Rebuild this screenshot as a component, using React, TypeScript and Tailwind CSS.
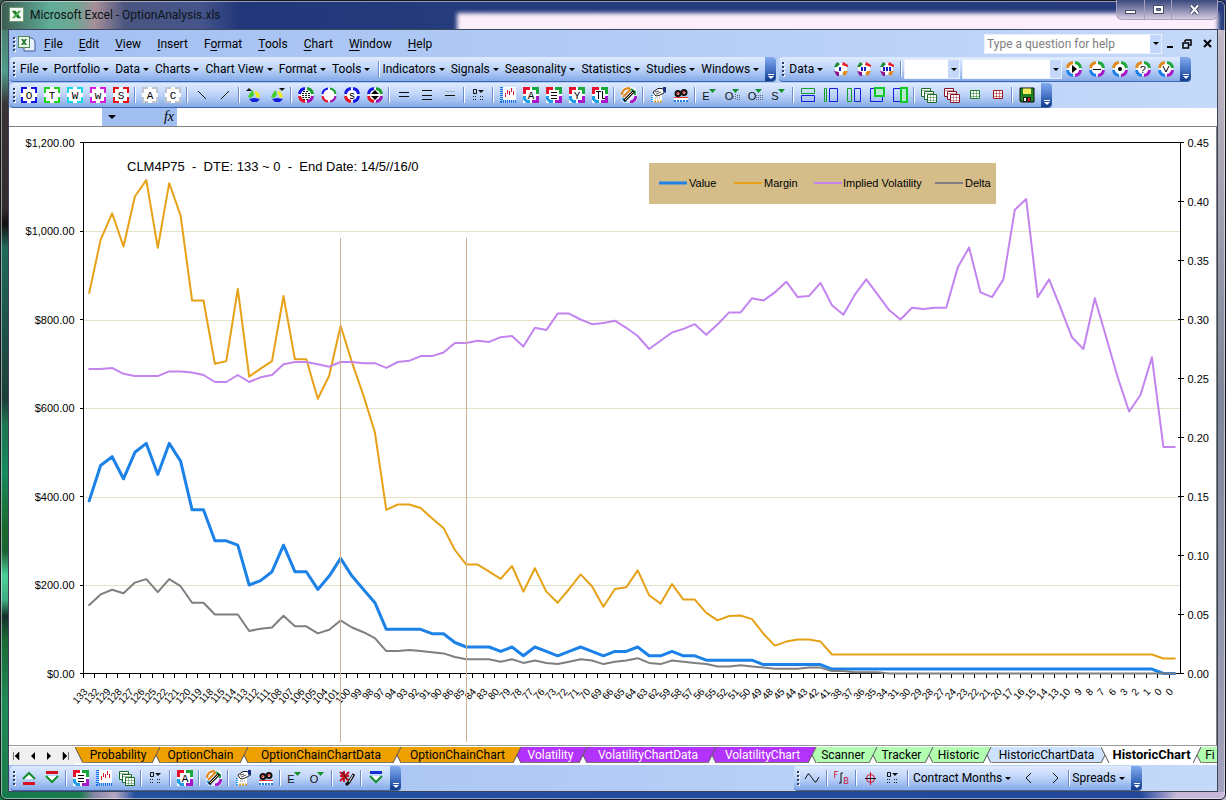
import React, { useState } from 'react';

const labels = [
  133, 132, 129, 128, 127, 126, 125, 122, 121, 120, 119, 118, 115, 114, 113, 112, 111, 108, 107, 106, 105, 104, 101, 100,
  99, 98, 97, 94, 93, 92, 91, 90, 86, 85, 84, 83, 80, 79, 78, 77, 76, 73, 72, 71, 70, 69, 66, 65, 64, 63, 62, 59, 58, 57,
  56, 55, 52, 51, 50, 49, 48, 45, 44, 43, 42, 41, 38, 37, 36, 35, 34, 31, 30, 29, 28, 27, 24, 23, 22, 21, 20, 17, 16, 15,
  14, 13, 10, 9, 8, 7, 6, 3, 2, 1, 0, 0,
];

const valueData = [
  390, 470, 490, 440, 500, 520, 450, 520, 480, 370, 370, 300, 300, 290, 200, 210, 230, 290, 230, 230, 190, 220, 260, 220,
  190, 160, 100, 100, 100, 100, 90, 90, 70, 60, 60, 60, 50, 60, 40, 60, 50, 40, 50, 60, 50, 40, 50, 50, 60, 40, 40, 50,
  40, 40, 30, 30, 30, 30, 30, 20, 20, 20, 20, 20, 20, ...Array(29).fill(10), 0, 0,
];

const marginData = [
  860, 980, 1040, 965, 1078, 1115, 962, 1108, 1035, 843, 843, 700, 706, 869, 671, 689, 706, 853, 710, 710, 621, 673, 786,
  703, 628, 545, 370, 382, 382, 374, 351, 329, 279, 246, 246, 230, 214, 243, 185, 238, 185, 160, 191, 224, 197, 151, 191,
  195, 233, 177, 158, 202, 167, 167, 137, 120, 130, 131, 123, 90, 63, 72, 77, 77, 72, ...Array(29).fill(43), 34, 34,
];

const volatilityData = [
  0.258, 0.258, 0.259, 0.254, 0.252, 0.252, 0.252, 0.256, 0.256, 0.255, 0.253, 0.247, 0.247, 0.253, 0.247, 0.251, 0.253,
  0.262, 0.264, 0.264, 0.262, 0.26, 0.264, 0.264, 0.263, 0.263, 0.259, 0.264, 0.265, 0.269, 0.269, 0.272, 0.28, 0.28,
  0.282, 0.281, 0.285, 0.286, 0.277, 0.293, 0.291, 0.305, 0.305, 0.3, 0.296, 0.297, 0.299, 0.293, 0.286, 0.275, 0.282,
  0.289, 0.292, 0.296, 0.287, 0.296, 0.306, 0.306, 0.318, 0.316, 0.323, 0.332, 0.319, 0.32, 0.331, 0.312, 0.304, 0.321,
  0.334, 0.321, 0.308, 0.3, 0.31, 0.309, 0.31, 0.31, 0.344, 0.361, 0.323, 0.319, 0.334, 0.393, 0.402, 0.319, 0.334,
  0.31, 0.285, 0.275, 0.318, 0.285, 0.251, 0.222, 0.236, 0.268, 0.192, 0.192,
];

const deltaData = [
  0.058, 0.067, 0.071, 0.068, 0.077, 0.08, 0.069, 0.08, 0.074, 0.06, 0.06, 0.05, 0.05, 0.05, 0.036, 0.038, 0.039, 0.049,
  0.04, 0.04, 0.034, 0.037, 0.045, 0.039, 0.035, 0.03, 0.019, 0.019, 0.02, 0.019, 0.018, 0.017, 0.014, 0.012, 0.012,
  0.012, 0.01, 0.012, 0.009, 0.011, 0.009, 0.008, 0.01, 0.012, 0.011, 0.008, 0.01, 0.011, 0.013, 0.009, 0.008, 0.011,
  0.01, 0.009, 0.008, 0.006, 0.006, 0.007, 0.006, 0.005, 0.004, 0.004, 0.004, 0.005, 0.005, 0.002, 0.002, 0.001, 0.001,
  0.001, ...Array(26).fill(0),
];

// Plot area inside the chart svg
const LEFT = 73.5;
const RIGHT = 1170.5;
const TOP = 15.5;
const BOTTOM = 546.5;
const STEP = (RIGHT - LEFT) / labels.length;

const pointX = (i: number) => LEFT + STEP * (i + 0.5);

const toPoints = (data: number[], max: number) =>
  data.map((v, i) => `${pointX(i).toFixed(1)},${(BOTTOM - (v / max) * (BOTTOM - TOP)).toFixed(1)}`).join(' ');

const series = [
  { name: 'Margin', color: '#e6a117', width: 2, data: marginData, max: 1200 },
  { name: 'Value', color: '#1c82e8', width: 3, data: valueData, max: 1200 },
  { name: 'Implied Volatility', color: '#c384f0', width: 2, data: volatilityData, max: 0.45 },
  { name: 'Delta', color: '#7f7f7f', width: 2, data: deltaData, max: 0.45 },
];

const legend = [
  { name: 'Value', color: '#1c82e8', width: 3, x: 649, textX: 679 },
  { name: 'Margin', color: '#e6a117', width: 2, x: 724, textX: 754 },
  { name: 'Implied Volatility', color: '#c384f0', width: 2, x: 804, textX: 833 },
  { name: 'Delta', color: '#7f7f7f', width: 2, x: 925, textX: 955 },
];

const HistoricChart = () => (
  <svg viewBox="0 0 1206 618" className="block w-full font-['Liberation_Sans',Arial,sans-serif]" role="img" aria-label="HistoricChart">
    {[200, 400, 600, 800, 1000].map((v) => {
      const y = Math.round(BOTTOM - (v / 1200) * (BOTTOM - TOP)) + 0.5;
      return <line key={v} x1={LEFT} x2={RIGHT} y1={y} y2={y} stroke="#e4e2c8" />;
    })}

    {/* Axes */}
    <path d={`M${LEFT} ${TOP}H${RIGHT}V${BOTTOM}H${LEFT}Z`} fill="none" stroke="#000" shapeRendering="crispEdges" />
    {[0, 200, 400, 600, 800, 1000, 1200].map((v) => {
      const y = BOTTOM - (v / 1200) * (BOTTOM - TOP);
      return (
        <g key={v}>
          <line x1={LEFT - 4} x2={LEFT} y1={y} y2={y} stroke="#000" shapeRendering="crispEdges" />
          <text x={LEFT - 9} y={y + 4} textAnchor="end" fontSize="11">
            ${v.toLocaleString('en-US')}.00
          </text>
        </g>
      );
    })}
    {[0, 1, 2, 3, 4, 5, 6, 7, 8, 9].map((n) => {
      const y = BOTTOM - (n / 9) * (BOTTOM - TOP);
      return (
        <g key={n}>
          <line x1={RIGHT - 3} x2={RIGHT + 3} y1={y} y2={y} stroke="#000" shapeRendering="crispEdges" />
          <text x={RIGHT + 7} y={y + 4} fontSize="11">
            {(n * 0.05).toFixed(2)}
          </text>
        </g>
      );
    })}
    {labels.map((label, i) => (
      <g key={i}>
        <line x1={LEFT + STEP * i} x2={LEFT + STEP * i} y1={BOTTOM} y2={BOTTOM + 4} stroke="#000" shapeRendering="crispEdges" />
        <text transform={`translate(${(pointX(i) - 1).toFixed(1)} 565) rotate(-48)`} textAnchor="end" fontSize="10">
          {label}
        </text>
      </g>
    ))}

    {series.map((s) => (
      <polyline
        key={s.name}
        points={toPoints(s.data, s.max)}
        fill="none"
        stroke={s.color}
        strokeWidth={s.width}
        strokeLinejoin="round"
        strokeLinecap="round"
      />
    ))}

    {/* Expiry markers */}
    <path d="M330.5 111V615M456.5 111V615" stroke="#cdb08f" shapeRendering="crispEdges" />

    <text x="117" y="44" fontSize="13" className="whitespace-pre">
      {'CLM4P75  -  DTE: 133 ~ 0  -  End Date: 14/5//16/0'}
    </text>

    <rect x="639" y="36" width="347" height="41" fill="#d5bd8a" />
    {legend.map((l) => (
      <g key={l.name}>
        <line x1={l.x} x2={l.x + 28} y1="56" y2="56" stroke={l.color} strokeWidth={l.width} />
        <text x={l.textX} y="60" fontSize="11">
          {l.name}
        </text>
      </g>
    ))}
  </svg>
);

/* ---------- icons ---------- */

const Icon = ({ children }: { children: React.ReactNode }) => (
  <svg width="16" height="16" viewBox="0 0 16 16" fill="none" aria-hidden="true">
    {children}
  </svg>
);

const Glyph = ({ children, fill = '#000' }: { children: string; fill?: string }) => (
  <text x="8" y="12" textAnchor="middle" fontSize="11" fill={fill} className="font-['Liberation_Mono',monospace]">
    {children}
  </text>
);

const Bracket = ({ color, letter }: { color: string; letter: string }) => (
  <Icon>
    <path d="M0 0H16V16H0Z" fill="#fff" />
    <path d="M6 1H1V6M10 1H15V6M15 10V15H10M6 15H1V10" stroke={color} strokeWidth="2" />
    <Glyph>{letter}</Glyph>
  </Icon>
);

const ColorBracket = ({ children }: { children: React.ReactNode }) => (
  <Icon>
    <path d="M0 0H16V16H0Z" fill="#fff" />
    <path d="M7 1.5H1.5V7" stroke="#e8112d" strokeWidth="3" />
    <path d="M9 1.5H14.5V7" stroke="#19a83c" strokeWidth="3" />
    <path d="M14.5 9V14.5H9" stroke="#a818c8" strokeWidth="3" />
    <path d="M7 14.5H4L1.5 12V9" stroke="#1f9fe8" strokeWidth="3" />
    {children}
  </Icon>
);

const Ring = ({ colors, width = 3, children }: { colors: string[]; width?: number; children?: React.ReactNode }) => (
  <Icon>
    <circle cx="8" cy="8" r="7" fill="#fff" />
    <path d="M1.5 7A6.5 6.5 0 0 1 7 1.5" stroke={colors[0]} strokeWidth={width} />
    <path d="M9 1.5A6.5 6.5 0 0 1 14.5 7" stroke={colors[1]} strokeWidth={width} />
    <path d="M14.5 9A6.5 6.5 0 0 1 9 14.5" stroke={colors[2]} strokeWidth={width} />
    <path d="M7 14.5A6.5 6.5 0 0 1 1.5 9" stroke={colors[3]} strokeWidth={width} />
    {children}
  </Icon>
);

const rainbow = ['#e08a1e', '#1ea83c', '#a818c8', '#1f7fe8'];
const primary = ['#1414e6', '#18a028', '#a010b0', '#e81020'];

const StackIcon = ({ color }: { color: string }) => (
  <Icon>
    <path d="M.5 1.5H9.5V9.5H.5Z" fill="#fff" stroke={color} />
    <path d="M3.5 4.5H12.5V12.5H3.5Z" fill="#fff" stroke={color} />
    <path d="M6.5 7.5H15.5V15.5H6.5Z" fill="#fff" stroke={color} />
    <path d="M7 10.5H15M7 13.5H15M9.5 8V15M12.5 8V15M1 3.5H9M4 6.5H12" stroke={color} strokeOpacity="0.4" />
  </Icon>
);

const SheetIcon = ({ color }: { color: string }) => (
  <Icon>
    <path d="M3.5 3.5H12.5V11.5H3.5Z" fill="#fff" stroke={color} />
    <path d="M3.5 6.5H12.5M3.5 9.5H12.5M6.5 3.5V11.5M9.5 3.5V11.5" stroke={color} strokeOpacity="0.5" />
  </Icon>
);

const LinesIcon = ({ rows, pale }: { rows: number[]; pale?: number[] }) => (
  <Icon>
    {rows.map((y) => (
      <path key={y} d={`M3 ${y}.5H13`} stroke="#111" />
    ))}
    {(pale || []).map((y) => (
      <path key={y} d={`M3 ${y}.5H13`} stroke="#a8b4c8" />
    ))}
  </Icon>
);

const ChartIcon = () => (
  <Icon>
    <path d="M3 0H16V13H3Z" fill="#fff" />
    <path d="M1.5 0V14.5H16" stroke="#a8d0f8" strokeWidth="3" />
    <path d="M1.5 0V14.5H16" stroke="#1f6fe8" strokeWidth="3" strokeDasharray="1 1" />
    <path d="M5.5 10V6M7.5 7V3M9.5 8V4M11.5 5V1M13.5 8V4" stroke="#d81830" />
  </Icon>
);

const DotsIcon = () => (
  <Icon>
    <path d="M2.5 2.5H5.5V6.5H2.5Z" stroke="#111" />
    <path d="M7 3H13L10 6Z" fill="#111" />
    <path d="M2 9.5H6M9 9.5H13M2 12.5H6M9 12.5H13" stroke="#222" strokeDasharray="1 1" />
  </Icon>
);

const BrushIcon = () => (
  <Icon>
    <path d="M3 0H13L16 3V13L13 16H3L0 13V3Z" fill="#fff" fillOpacity="0.7" />
    <path d="M1 8Q1 1 9 1M2 10L10 2" stroke="#e6861a" strokeWidth="2" />
    <path d="M10 2L14 5V8" stroke="#1ea83c" strokeWidth="2" />
    <path d="M9 15Q14 15 15 9" stroke="#a818c8" strokeWidth="3" />
    <path d="M1 11L5 15" stroke="#1f9fe8" strokeWidth="2" />
    <path d="M3 14L13 4" stroke="#111" strokeWidth="3" />
    <path d="M4 13L12 5" stroke="#f0e4a0" />
  </Icon>
);

const HandIcon = () => (
  <Icon>
    <path d="M2 7H12V15H2Z" fill="#fff" />
    <path d="M3 5L8 1.5H12L14 3V6L10 8L6 9L4 7Z" fill="#fff" stroke="#222" />
    <path d="M5 5L9 4M6 7L11 5" stroke="#555" />
    <path d="M13 0H16V6L13 4Z" fill="#1a2f80" />
    <path d="M2 8V15" stroke="#1f9fe8" strokeWidth="2" strokeDasharray="1 1" />
    <path d="M4 14.5H13" stroke="#e0a020" strokeWidth="2" strokeDasharray="2 1" />
    <path d="M5 11H11" stroke="#888" strokeDasharray="1 1" />
  </Icon>
);

const GlassesIcon = () => (
  <Icon>
    <path d="M1 10H15V15H1Z" fill="#fff" />
    <circle cx="5" cy="6.5" r="2.5" fill="#f8a090" stroke="#111" strokeWidth="2" />
    <circle cx="11" cy="5.5" r="2.5" fill="#f8a090" stroke="#111" strokeWidth="2" />
    <path d="M4 7L6 5M10 6L12 4" stroke="#e81828" />
    <path d="M1 10.5H15" stroke="#e83030" />
    <path d="M1 14H15" stroke="#1f7fe8" strokeWidth="2" strokeDasharray="2 1" />
  </Icon>
);

const LetterDrop = ({ letter, tail }: { letter: string; tail?: string }) => (
  <Icon>
    <text x="4" y="13" textAnchor="middle" fontSize="11" fill="#111" className="font-['Liberation_Sans',Arial,sans-serif]">
      {letter}
    </text>
    <path d="M7 2H14L10.5 6Z" fill="#12902c" />
    {tail && <path d={tail} stroke="#667" strokeDasharray="1 1" />}
  </Icon>
);

const WedgeIcon = ({ flip }: { flip?: boolean }) => (
  <Icon>
    <path d={flip ? 'M10 1H16L13 4Z' : 'M0 4H6L3 1Z'} fill="#111" />
    <path d="M2 10Q3 6 7 3L8 8L5 11Z" fill="#42d030" />
    <path d="M8 4Q13 4 14 10L11 11Z" fill="#f0e818" />
    <path d="M3 12L8 11L14 12L11 15H6Z" fill="#1420d8" />
  </Icon>
);

const BarsRing = ({ bars }: { bars: number[] }) => (
  <Icon>
    <circle cx="8" cy="8" r="6" fill="#fff" />
    <path d="M1 6L4 1L7 3L4 6Z" fill="#158a30" />
    <path d="M10 1L15 4V6L9 4Z" fill="#e81828" />
    <path d="M11 10H15L12 15L9 13Z" fill="#e08a1e" />
    <path d="M1 10L6 11V15H4Z" fill="#901090" />
    {bars.map((x) => (
      <path key={x} d={`M${x} 6V10`} stroke="#1420c8" strokeWidth="2" />
    ))}
  </Icon>
);

const SplitIcon = ({ green, blue, fill }: { green: string; blue: string; fill?: string }) => (
  <Icon>
    <path d={blue} stroke="#1420d8" />
    <path d={green} stroke={fill ? '#10c828' : '#12a028'} strokeWidth={fill ? 2 : 1} fill={fill || 'none'} />
  </Icon>
);

const ArrowBars = ({ down, top, bottom }: { down?: boolean; top: string; bottom: string }) => (
  <Icon>
    <path d={down ? 'M2 2.5H14' : 'M2 13.5H14'} stroke={top} strokeWidth="3" />
    <path d={down ? 'M2 6L8 12L14 6' : 'M2 9L8 3L14 9'} stroke={bottom} strokeWidth="2" fill="#fff" />
  </Icon>
);

const ClearIcon = () => (
  <Icon>
    <path d="M1 2L10 11M10 2L1 11M5 1V12M1 6H10" stroke="#c81020" strokeWidth="2" />
    <path d="M3 2L8 9" stroke="#222" />
    <path d="M15 4L10 12L7 15" stroke="#111" strokeWidth="3" />
    <path d="M14 5L10 12" stroke="#fff" />
  </Icon>
);

const SaveIcon = () => (
  <Icon>
    <path d="M1 1H15V15H2L1 14Z" fill="#20861f" stroke="#111" />
    <path d="M4 1.5H12V7H4Z" fill="#f4ec60" />
    <path d="M4 10H12V15H4Z" fill="#222" />
    <path d="M9 11H11V14H9Z" fill="#e81828" />
    <path d="M5 11H7V14H5Z" fill="#fff" />
  </Icon>
);

/* ---------- toolbar pieces ---------- */

const Caret = () => <span className="inline-block border-x-3 border-t-3 border-x-transparent border-t-black" />;

const Grip = () => (
  <svg width="4" height="16" viewBox="0 0 4 16" className="ml-[3px] shrink-0" aria-hidden="true">
    {[1, 5, 9, 13].map((y) => (
      <g key={y}>
        <rect x="1" y={y + 1} width="2" height="2" fill="#fff" />
        <rect x="0" y={y} width="2" height="2" fill="#2b3f66" />
      </g>
    ))}
  </svg>
);

const Sep = () => (
  <span className="flex w-[6px] shrink-0 justify-center">
    <span className="h-4 w-px bg-[#6a8ccb]" />
    <span className="h-4 w-px bg-white" />
  </span>
);

const ToolbarEnd = () => (
  <button
    aria-label="Toolbar options"
    className="ml-auto flex h-full w-[11px] shrink-0 flex-col items-center justify-end rounded-r-sm bg-linear-to-b from-[#82aaf0] via-[#4a78c8] to-[#103a8c] pb-[2px]"
  >
    <span className="h-px w-[6px] bg-white" />
    <span className="mt-px border-x-3 border-t-3 border-x-transparent border-t-white" />
  </button>
);

const Toolbar = ({ children, className }: { children: React.ReactNode; className?: string }) => (
  <div
    role="toolbar"
    className={`flex h-[25px] items-center rounded-sm border-b border-[#3c66ae] bg-linear-to-b from-[#dfebfe] via-[#bcd3f8] to-[#85aae8] ${className || ''}`}
  >
    <Grip />
    {children}
    <ToolbarEnd />
  </div>
);

const Tool = ({ label, children }: { label: string; children: React.ReactNode }) => (
  <button aria-label={label} className="flex h-[22px] w-[23px] shrink-0 items-center justify-center hover:bg-white/50">
    {children}
  </button>
);

const Drop = ({ label }: { label: string }) => (
  <button className="flex shrink-0 items-center gap-[3px] whitespace-nowrap pr-[6px] hover:bg-white/50">
    {label}
    <Caret />
  </button>
);

const Combo = ({ label, className }: { label: string; className: string }) => (
  <span className={`relative h-[20px] shrink-0 border border-[#e8f0ff] bg-white ${className}`}>
    <select aria-label={label} className="h-full w-full appearance-none bg-transparent">
      <option value=""></option>
    </select>
    <span className="pointer-events-none absolute inset-y-0 right-0 flex w-[11px] items-center justify-center bg-[#c3d8fa]">
      <Caret />
    </span>
  </span>
);

const menus = [
  ['', 'F', 'ile'],
  ['', 'E', 'dit'],
  ['', 'V', 'iew'],
  ['', 'I', 'nsert'],
  ['F', 'o', 'rmat'],
  ['', 'T', 'ools'],
  ['', 'C', 'hart'],
  ['', 'W', 'indow'],
  ['', 'H', 'elp'],
];

const ORANGE = '#eda000';
const PURPLE = '#b433fc';
const GREEN = '#b2ffb2';
const BLUE = '#cce2ff';

const tabs = [
  { name: 'Probability', color: ORANGE, width: 'w-[68px]' },
  { name: 'OptionChain', color: ORANGE, width: 'w-[79px]' },
  { name: 'OptionChainChartData', color: ORANGE, width: 'w-[144px]' },
  { name: 'OptionChainChart', color: ORANGE, width: 'w-[111px]' },
  { name: 'Volatility', color: PURPLE, width: 'w-[57px]' },
  { name: 'VolatilityChartData', color: PURPLE, width: 'w-[120px]' },
  { name: 'VolatilityChart', color: PURPLE, width: 'w-[91px]' },
  { name: 'Scanner', color: GREEN, width: 'w-[52px]' },
  { name: 'Tracker', color: GREEN, width: 'w-[47px]' },
  { name: 'Historic', color: GREEN, width: 'w-[49px]' },
  { name: 'HistoricChartData', color: BLUE, width: 'w-[109px]' },
  { name: 'HistoricChart', color: '#ffffff', width: 'w-[83px]' },
  { name: 'Fi', color: GREEN, width: 'w-[16px]' },
];

// Slanted edge between two neighbouring sheet tabs
const TabEdge = ({ left, right, front }: { left?: string; right: string; front: boolean }) => (
  <svg width="9" height="16" viewBox="0 0 9 16" className="shrink-0" aria-hidden="true">
    {front ? (
      <>
        <path d="M0 0H9V16H0Z" fill={left ? '#fff' : '#f0f0f0'} />
        {left && <path d="M0 0L4 8L0 16Z" fill={left} />}
        <path d="M0 0H9V16H8Z" fill={right} />
        <path d={left ? 'M0 0L8 16M4 8L0 16' : 'M0 0L8 16'} stroke="#555" fill="none" />
      </>
    ) : (
      <>
        <path d="M0 0H9V16H0Z" fill="#fff" />
        <path d="M0 0H8L0 16Z" fill={left} />
        <path d="M8 0H9V16H8L4 8Z" fill={right} />
        <path d="M8 0L0 16M4 8L8 16" stroke="#555" fill="none" />
      </>
    )}
  </svg>
);

const App: React.FC = () => {
  const [activeTab, setActiveTab] = useState('HistoricChart');
  const [question, setQuestion] = useState('');

  return (
    <div className="relative min-h-screen overflow-hidden bg-[linear-gradient(180deg,#4a6a5c_0%,#4f9c8a_9%,#3a3335_13%,#332c2e_26%,#14100f_28%,#1f6a5c_31%,#1c3f38_50%,#1b7550_53%,#178a60_59%,#1a6a2c_66%,#1b6434_69%,#4ad09a_72%,#3fae80_75%,#12302a_77%,#1a6a34_80%,#1f8a58_88%,#1b7a4c_100%)] font-[Roboto,sans-serif] text-[12px] leading-4 text-black">
      {/* Glass frame tint */}
      <div className="absolute inset-y-0 right-0 w-2 bg-linear-to-b from-[#c9bccb] via-[#7e8799] to-[#a4a2bd]" />
      <div className="absolute inset-x-0 bottom-0 h-2 bg-[linear-gradient(90deg,#137a4e_0,#1c7a50_80px,#8a86a8_95px,#b8a8c4_115px,#2450a0_135px,#22479b_93%,#c8b8d8_96%)]" />
      <div className="absolute inset-x-0 top-0 h-[30px] bg-[linear-gradient(90deg,#3d5a50_0,#5fae98_50px,#6fa593_75px,#a68f98_95px,#4a5580_125px,#45548a_200px,#22377a_240px,#243b7c_450px,#283c7c_100%)]" />
      <div className="absolute top-[13px] right-2 left-[457px] h-[20px] bg-[#fceefb] blur-[2px]" />
      <div className="absolute inset-0 rounded-md border border-[#14181c] shadow-[inset_0_0_0_1px_#ffffff80]" />

      <div className="relative flex min-h-screen flex-col pr-2 pb-2 pl-2">
        {/* Title bar */}
        <header className="flex h-[29px] items-center">
          <svg width="15" height="15" viewBox="0 0 16 16" className="ml-[1px]" aria-hidden="true">
            <rect x="0.5" y="0.5" width="15" height="15" rx="1" fill="#f4faf2" stroke="#6a9a6a" />
            <path d="M3 4H7L13 12H9Z" fill="#1e7a2c" />
            <path d="M10 4H13L6 12H3Z" fill="#4aa84c" />
          </svg>
          <h1 className="ml-[6px] text-[#0c1418]">Microsoft Excel - OptionAnalysis.xls</h1>
          <div className="ml-auto flex h-[20px] self-start overflow-hidden rounded-b-md border border-t-0 border-[#a8a0bc] bg-linear-to-b from-[#3a487c] to-[#d8cbe0]">
            <button aria-label="Minimize" className="flex w-[28px] items-center justify-center border-r border-[#a8a0bc]">
              <svg width="13" height="13" viewBox="0 0 13 13" aria-hidden="true">
                <rect x="1.5" y="7.5" width="10" height="3" fill="#fff" stroke="#444b66" />
              </svg>
            </button>
            <button aria-label="Restore" className="flex w-[27px] items-center justify-center border-r border-[#a8a0bc]">
              <svg width="13" height="13" viewBox="0 0 13 13" aria-hidden="true">
                <path d="M1.5 2.5H11.5V10.5H1.5ZM4.5 5.5V7.5H8.5V5.5Z" fill="#fff" fillRule="evenodd" stroke="#444b66" />
              </svg>
            </button>
            <button aria-label="Close" className="flex w-[45px] items-center justify-center">
              <svg width="13" height="13" viewBox="0 0 13 13" aria-hidden="true">
                <path d="M3 2.5L10 10.5M10 2.5L3 10.5" stroke="#3c4260" strokeWidth="4" />
                <path d="M3 2.5L10 10.5M10 2.5L3 10.5" stroke="#fff" strokeWidth="2" />
              </svg>
            </button>
          </div>
        </header>

        <div className="flex flex-1 flex-col border border-[#3c4658] bg-linear-to-r from-[#a2bff2] to-[#c5d9f9]">
          {/* Menu bar */}
          <nav className="flex h-[27px] items-center pl-px">
            <Grip />
            <svg width="18" height="17" viewBox="0 0 18 17" className="ml-px" aria-hidden="true">
              <path d="M6 3H14L17 6V16H6Z" fill="#e8f0fc" stroke="#3c5a94" />
              <rect x="0.5" y="1.5" width="11" height="11" fill="#eef8ec" stroke="#4c8a50" />
              <path d="M3 4H5L9 10H7ZM7 4H9L5 10H3Z" fill="#1e7a2c" />
            </svg>
            {menus.map(([before, key, after]) => (
              <button key={key + after} className="px-2 hover:bg-white/50">
                {before}
                <span className="underline underline-offset-2">{key}</span>
                {after}
              </button>
            ))}
            <div className="ml-auto flex h-[20px] w-[178px] border border-[#e8f0ff] bg-white">
              <input
                aria-label="Type a question for help"
                placeholder="Type a question for help"
                value={question}
                onChange={(e) => setQuestion(e.target.value)}
                className="min-w-0 flex-1 px-[2px] outline-none placeholder:text-[#808080]"
              />
              <button aria-label="Recent questions" className="flex w-[11px] items-center justify-center bg-[#c3d8fa]">
                <Caret />
              </button>
            </div>
            <button aria-label="Minimize workbook" className="ml-[2px] p-[2px]">
              <svg width="8" height="10" viewBox="0 0 8 10" aria-hidden="true">
                <path d="M1 8H7" stroke="#000" strokeWidth="2" />
              </svg>
            </button>
            <button aria-label="Restore workbook" className="ml-[4px] p-[2px]">
              <svg width="10" height="10" viewBox="0 0 10 10" fill="none" aria-hidden="true">
                <path d="M3 1H9V6H7M3 1V3" stroke="#000" strokeWidth="1.5" />
                <path d="M1 4H6.5V9H1Z" stroke="#000" strokeWidth="1.5" />
              </svg>
            </button>
            <button aria-label="Close workbook" className="mr-[3px] ml-[7px] p-[2px]">
              <svg width="9" height="9" viewBox="0 0 9 9" aria-hidden="true">
                <path d="M1 1L8 8M8 1L1 8" stroke="#000" strokeWidth="2" />
              </svg>
            </button>
          </nav>

          {/* Option analysis menus */}
          <div className="flex gap-[3px] pl-px">
            <Toolbar>
              <span className="w-[3px]" />
              {['File', 'Portfolio', 'Data', 'Charts', 'Chart View', 'Format', 'Tools'].map((label) => (
                <Drop key={label} label={label} />
              ))}
              <Sep />
              {['Indicators', 'Signals', 'Seasonality', 'Statistics', 'Studies', 'Windows'].map((label) => (
                <Drop key={label} label={label} />
              ))}
            </Toolbar>
            <Toolbar>
              <span className="w-[3px]" />
              <Drop label="Data" />
              <Tool label="One series">
                <BarsRing bars={[7]} />
              </Tool>
              <Tool label="Two series">
                <BarsRing bars={[6, 9]} />
              </Tool>
              <Tool label="Three series">
                <BarsRing bars={[5, 8, 11]} />
              </Tool>
              <Sep />
              <Combo label="Symbol" className="w-[56px]" />
              <Combo label="Study" className="ml-[2px] w-[100px]" />
              <Tool label="Run">
                <Ring colors={rainbow}>
                  <path d="M6 4L11 8L6 12Z" fill="#000" />
                </Ring>
              </Tool>
              <Tool label="Remove">
                <Ring colors={rainbow}>
                  <path d="M4 8.5H12" stroke="#000" />
                </Ring>
              </Tool>
              <Tool label="Select">
                <Ring colors={rainbow}>
                  <circle cx="8" cy="8" r="2" fill="#000" />
                </Ring>
              </Tool>
              <Tool label="Query">
                <Ring colors={rainbow}>
                  <Glyph>?</Glyph>
                </Ring>
              </Tool>
              <Tool label="Verify">
                <Ring colors={rainbow}>
                  <path d="M5 5L8 11L11 5" stroke="#000" />
                </Ring>
              </Tool>
              <span className="w-[3px]" />
            </Toolbar>
          </div>

          {/* Chart tools */}
          <div className="mt-px flex pl-px">
            <Toolbar>
              <Tool label="Option"><Bracket color="#1414e6" letter="O" /></Tool>
              <Tool label="Trade"><Bracket color="#22d022" letter="T" /></Tool>
              <Tool label="Watch"><Bracket color="#18d8e8" letter="W" /></Tool>
              <Tool label="Window"><Bracket color="#d818d8" letter="w" /></Tool>
              <Tool label="Stock"><Bracket color="#e81010" letter="S" /></Tool>
              <Sep />
              <Tool label="Analysis"><Bracket color="#c0c4cc" letter="A" /></Tool>
              <Tool label="Chart"><Bracket color="#c0c4cc" letter="C" /></Tool>
              <Sep />
              <Tool label="Line down"><Icon><path d="M4 4L12 12" stroke="#111" /></Icon></Tool>
              <Tool label="Line up"><Icon><path d="M4 12L12 4" stroke="#111" /></Icon></Tool>
              <Sep />
              <Tool label="Rotate left"><WedgeIcon /></Tool>
              <Tool label="Rotate right"><WedgeIcon flip /></Tool>
              <Sep />
              <Tool label="Lines">
                <Ring colors={primary}>
                  <path d="M5 4.5H11M4 6.5H12M4 8.5H12M4 10.5H12M5 12.5H11" stroke="#222" strokeDasharray="2 1" />
                </Ring>
              </Tool>
              <Tool label="Circle"><Ring colors={primary} width={2} /></Tool>
              <Tool label="Scale">
                <Ring colors={['#1414e6', '#1414e6', '#1414e6', '#e81020']}><Glyph>s</Glyph></Ring>
              </Tool>
              <Tool label="Move">
                <Ring colors={primary}>
                  <path d="M4 7L8 3L12 7ZM4 9L8 13L12 9Z" fill="#000" />
                </Ring>
              </Tool>
              <Sep />
              <Tool label="Two lines"><LinesIcon rows={[5, 9]} /></Tool>
              <Tool label="Three lines"><LinesIcon rows={[3, 8, 12]} /></Tool>
              <Tool label="One line"><LinesIcon rows={[8]} pale={[4, 11]} /></Tool>
              <Sep />
              <Tool label="Points"><DotsIcon /></Tool>
              <Sep />
              <Tool label="Price chart"><ChartIcon /></Tool>
              <Tool label="Axis"><ColorBracket><Glyph>A</Glyph></ColorBracket></Tool>
              <Tool label="List">
                <ColorBracket><path d="M5 5.5H11M5 8.5H11M5 11.5H11" stroke="#000" /></ColorBracket>
              </Tool>
              <Tool label="Y axis"><ColorBracket><Glyph>Y</Glyph></ColorBracket></Tool>
              <Tool label="Title">
                <ColorBracket><path d="M4 4.5H9M6.5 4V12M10.5 4V11.5H13" stroke="#000" /></ColorBracket>
              </Tool>
              <Sep />
              <Tool label="Format"><BrushIcon /></Tool>
              <Sep />
              <Tool label="Properties"><HandIcon /></Tool>
              <Tool label="View"><GlassesIcon /></Tool>
              <Sep />
              <Tool label="E menu"><LetterDrop letter="E" /></Tool>
              <Tool label="O bars"><LetterDrop letter="O" tail="M8.5 9V13M10.5 7V13M12.5 8V13M14.5 8V13" /></Tool>
              <Tool label="O rows"><LetterDrop letter="O" tail="M8 8.5H16M8 10.5H16M8 12.5H16" /></Tool>
              <Tool label="S menu"><LetterDrop letter="S" /></Tool>
              <Sep />
              <Tool label="Tile rows"><SplitIcon green="M1.5 1.5H14.5V6.5H1.5Z" blue="M1.5 8.5H14.5V14.5H1.5Z" /></Tool>
              <Tool label="Tile columns"><SplitIcon green="M1.5 1.5H3.5V14.5H1.5Z" blue="M6.5 1.5H14.5V14.5H6.5Z" /></Tool>
              <Tool label="Tile equal"><SplitIcon green="M1.5 1.5H5.5V14.5H1.5Z" blue="M8.5 1.5H14.5V14.5H8.5Z" /></Tool>
              <Tool label="Overlay"><SplitIcon green="M6 1H15V9H6Z" blue="M1.5 1.5H13.5V14.5H1.5Z" fill="#b8e8d0" /></Tool>
              <Tool label="Overlay right"><SplitIcon green="M9 1H15V15H9Z" blue="M1.5 1.5H8.5V14.5H1.5Z" fill="#b8e8d0" /></Tool>
              <Sep />
              <Tool label="Sheets"><StackIcon color="#1c6a28" /></Tool>
              <Tool label="Remove sheets"><StackIcon color="#8a1420" /></Tool>
              <Tool label="Sheet"><SheetIcon color="#1c7a28" /></Tool>
              <Tool label="Remove sheet"><SheetIcon color="#a01420" /></Tool>
              <Sep />
              <Tool label="Save"><SaveIcon /></Tool>
              <span className="w-[3px]" />
            </Toolbar>
          </div>

          {/* Formula bar */}
          <div className="flex h-[18px] bg-white pl-px">
            <input aria-label="Name box" className="w-[92px] outline-none" />
            <div className="flex w-[75px] items-center justify-between bg-[#a2bff2] pr-[3px] pl-[6px]">
              <button aria-label="Name list" className="flex">
                <span className="border-x-4 border-t-4 border-x-transparent border-t-black" />
              </button>
              <button className="font-['Liberation_Serif',serif] text-[14px] leading-4 italic">fx</button>
            </div>
            <input aria-label="Formula" className="flex-1 outline-none" />
          </div>

          <main className="border-t border-r border-[#808080] bg-white pl-px">
            <HistoricChart />
          </main>

          {/* Sheet tabs */}
          <div className="flex h-[20px] overflow-hidden border-t border-[#9a9a9a] bg-white pt-px pl-px">
            <div className="flex w-[65px] shrink-0 items-center justify-between bg-[#f0f0f0] pr-[5px] pl-[2px]">
              {['M1.5 1V9M7 1V9L3 5Z', 'M6 1V9L2 5Z', 'M2 1V9L6 5Z', 'M6.5 1V9M1 1V9L5 5Z'].map((d, i) => (
                <button key={d} aria-label={['First sheet', 'Previous sheet', 'Next sheet', 'Last sheet'][i]}>
                  <svg width="8" height="10" viewBox="0 0 8 10" aria-hidden="true">
                    <path d={d} fill="#000" stroke={i === 0 || i === 3 ? '#000' : 'none'} strokeWidth="0.5" />
                  </svg>
                </button>
              ))}
            </div>
            {tabs.map((tab, i) => {
              const active = tab.name === activeTab;
              return (
                <React.Fragment key={tab.name}>
                  <TabEdge left={i > 0 ? tabs[i - 1].color : undefined} right={tab.color} front={i === 0 || active} />
                  <button
                    onClick={() => setActiveTab(tab.name)}
                    style={{ backgroundColor: tab.color }}
                    className={`flex h-[16px] shrink-0 items-center justify-center whitespace-nowrap border-b ${tab.width} ${
                      tab.color === PURPLE ? 'text-white' : 'text-black'
                    } ${active ? 'border-transparent text-[13px] font-bold' : 'border-[#777]'}`}
                  >
                    {tab.name}
                  </button>
                </React.Fragment>
              );
            })}
          </div>

          {/* Bottom toolbars */}
          <div className="mt-auto flex pl-px">
            <Toolbar>
              <Tool label="Move up"><ArrowBars top="#d81020" bottom="#12902c" /></Tool>
              <Tool label="Move down"><ArrowBars down top="#d81020" bottom="#12902c" /></Tool>
              <Sep />
              <Tool label="List">
                <ColorBracket><path d="M5 5.5H11M5 8.5H11M5 11.5H11" stroke="#000" /></ColorBracket>
              </Tool>
              <Tool label="Price chart"><ChartIcon /></Tool>
              <Tool label="Sheets"><StackIcon color="#1c6a28" /></Tool>
              <Sep />
              <Tool label="Points"><DotsIcon /></Tool>
              <Sep />
              <Tool label="Axis"><ColorBracket><Glyph>A</Glyph></ColorBracket></Tool>
              <Sep />
              <Tool label="Format"><BrushIcon /></Tool>
              <Sep />
              <Tool label="Properties"><HandIcon /></Tool>
              <Tool label="View"><GlassesIcon /></Tool>
              <Sep />
              <Tool label="E menu"><LetterDrop letter="E" /></Tool>
              <Tool label="O menu"><LetterDrop letter="O" /></Tool>
              <Sep />
              <Tool label="Clear format"><ClearIcon /></Tool>
              <Sep />
              <Tool label="Move end"><ArrowBars down top="#1430d0" bottom="#12902c" /></Tool>
              <span className="w-[3px]" />
            </Toolbar>
            <Toolbar className="mr-[75px] ml-auto">
              <Tool label="Wave"><Icon><path d="M1 9L4 4H5L11 12H12L15 7" stroke="#111" /></Icon></Tool>
              <Sep />
              <Tool label="Front and back">
                <Icon>
                  <text x="3" y="8" textAnchor="middle" fontSize="9" fill="#c81030">F</text>
                  <text x="13" y="14" textAnchor="middle" fontSize="9" fill="#c81030">B</text>
                  <path d="M10 3H8V13H6" stroke="#111" />
                </Icon>
              </Tool>
              <Sep />
              <Tool label="Theta">
                <Icon>
                  <path d="M8.5 2V15" stroke="#d01028" />
                  <circle cx="8.5" cy="8.5" r="4" stroke="#d01028" />
                  <path d="M3 8.5H14" stroke="#111" />
                </Icon>
              </Tool>
              <Tool label="Points"><DotsIcon /></Tool>
              <Sep />
              <span className="w-[2px]" />
              <Drop label="Contract Months" />
              <Tool label="Previous month"><Icon><path d="M10 3L5 8L10 13" stroke="#111" /></Icon></Tool>
              <span className="w-[3px]" />
              <Tool label="Next month"><Icon><path d="M6 3L11 8L6 13" stroke="#111" /></Icon></Tool>
              <Sep />
              <Drop label="Spreads" />
            </Toolbar>
          </div>
        </div>
      </div>
    </div>
  );
};

export default App;
